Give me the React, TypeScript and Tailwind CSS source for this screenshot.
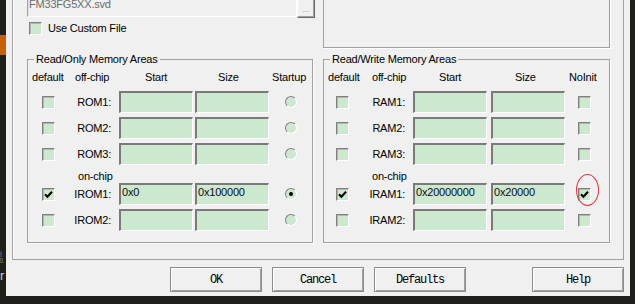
import React from 'react';

type Row = {
  label: string;
  start?: string;
  size?: string;
  checked?: boolean;
  last?: boolean;
  circled?: boolean;
};

const inputCls =
  'h-[22px] w-[74px] shrink-0 border-t-2 border-l-2 border-b border-r border-t-[#7a7a7a] border-l-[#7a7a7a] border-b-white border-r-white bg-[#cce8cf] pl-[1px] pt-[1px] leading-[13px] text-[#0a0a20] whitespace-nowrap overflow-hidden';

const Check = () => (
  <svg width="9" height="9" viewBox="0 0 9 9">
    <path d="M1 4.2 L3.4 6.8 L8 1.8" stroke="#000" strokeWidth="2" fill="none" />
  </svg>
);

const CheckBox = ({ checked, circled }: { checked?: boolean; circled?: boolean }) => (
  <span className="relative flex h-[13px] w-[13px] shrink-0 items-center justify-center border border-t-[#808080] border-l-[#808080] border-b-white border-r-white bg-[#cce8cf] shadow-[inset_1px_1px_0_#b4b4b4]">
    {checked && <Check />}
    {circled && (
      <span className="absolute left-[-3px] top-[-15px] h-[32px] w-[23px] rounded-[50%] border border-[#e5303f]" />
    )}
  </span>
);

const Radio = ({ on }: { on?: boolean }) => (
  <span className="flex h-[12px] w-[12px] shrink-0 items-center justify-center rounded-full border border-t-[#808080] border-l-[#808080] border-b-white border-r-white bg-[#cce8cf]">
    {on && <span className="h-[4px] w-[4px] rounded-full bg-black" />}
  </span>
);

const romOff: Row[] = [{ label: 'ROM1:' }, { label: 'ROM2:' }, { label: 'ROM3:' }];
const romOn: Row[] = [
  { label: 'IROM1:', start: '0x0', size: '0x100000', checked: true },
  { label: 'IROM2:' },
];
const ramOff: Row[] = [{ label: 'RAM1:' }, { label: 'RAM2:' }, { label: 'RAM3:' }];
const ramOn: Row[] = [
  { label: 'IRAM1:', start: '0x20000000', size: '0x20000', checked: true, circled: true },
  { label: 'IRAM2:' },
];

const RomRow = ({ r }: { r: Row }) => (
  <div className="flex h-[22px] items-center">
    <div className="w-[46px] shrink-0 pl-[14px]">
      <CheckBox checked={r.checked} />
    </div>
    <span className="w-[37px] shrink-0 text-right">{r.label}</span>
    <div className={`ml-[8px] ${inputCls}`}>{r.start}</div>
    <div className={`ml-[2px] ${inputCls}`}>{r.size}</div>
    <div className="ml-[16px]">
      <Radio on={r.checked} />
    </div>
  </div>
);

const RamRow = ({ r }: { r: Row }) => (
  <div className="flex h-[22px] items-center">
    <div className="w-[44px] shrink-0 pl-[12px]">
      <CheckBox checked={r.checked} />
    </div>
    <span className="w-[37px] shrink-0 text-right">{r.label}</span>
    <div className={`ml-[8px] ${inputCls}`}>{r.start}</div>
    <div className={`ml-[4px] ${inputCls}`}>{r.size}</div>
    <div className="ml-[13px]">
      <CheckBox checked={r.checked} circled={r.circled} />
    </div>
  </div>
);

const Button = ({ children, className = '' }: { children: React.ReactNode; className?: string }) => (
  <button
    className={`flex h-[25px] w-[92px] shrink-0 items-center justify-center border border-[#8c8c8c] bg-[#f0f0f0] font-['Liberation_Mono',monospace] text-[12px] tracking-[-1.2px] text-black shadow-[inset_1px_1px_0_#fff,inset_-1px_-1px_0_#a0a0a0] ${className}`}
  >
    {children}
  </button>
);

export default function App() {
  return (
    <div className="flex h-[304px] w-[635px] overflow-hidden bg-[#1e1e1b] font-['Liberation_Sans',Arial,sans-serif] text-[11px] tracking-[-0.2px] text-black">
      {/* background editor strip */}
      <div className="flex w-[6px] shrink-0 flex-col overflow-hidden">
        <div className="mt-[35px] h-[20px] bg-[#c4600c]" />
        <span className="mt-[42px] -ml-[8px] text-[14px] leading-[14px] text-[#6d7d8d]">衤</span>
        <span className="mt-[140px] -ml-[9px] text-[13px] leading-[14px] text-[#5d6a76]">温</span>
        <span className="mt-[4px] text-[13px] leading-[14px] text-[#c8c8c8]">r</span>
      </div>

      {/* dialog */}
      <div className="flex h-[296px] w-[624px] shrink-0 flex-col bg-[#f0f0f0]">
        <div className="ml-[6px] flex h-[260px] w-[612px] shrink-0 flex-col border-x border-b border-[#a0a0a0] pl-[14px] shadow-[inset_1px_0_0_#fff]">
          {/* top row */}
          <div className="flex h-[48px] shrink-0">
            <div className="flex w-[288px] shrink-0 flex-col">
              <div className="-mt-[5px] flex">
                <div className="h-[22px] w-[270px] border border-t-[#a0a0a0] border-l-[#a0a0a0] border-b-white border-r-white bg-[#f0f0f0] pl-[1px] pt-[2px] leading-[13px] text-[#6d6d6d] shadow-[inset_1px_1px_0_#e3e3e3]">
                  FM33FG5XX.svd
                </div>
                <div className="flex h-[23px] w-[18px] items-end justify-center border border-t-white border-l-white border-b-[#696969] border-r-[#696969] pb-[3px] text-[9px] leading-[9px] text-[#a0a0a0] shadow-[inset_-1px_-1px_0_#a0a0a0]">
                  ...
                </div>
              </div>
              <label className="mt-[4px] ml-[2px] flex items-center gap-[6px] leading-[13px]">
                <CheckBox />
                <span>Use Custom File</span>
              </label>
            </div>
            <div className="-mt-[4px] ml-[8px] h-[52px] w-[287px] shrink-0 border border-[#a0a0a0] shadow-[1px_1px_0_#fff]" />
          </div>

          {/* memory areas */}
          <div className="mt-[4px] flex">
            <fieldset className="h-[191px] w-[286px] shrink-0 border border-[#a0a0a0] shadow-[1px_1px_0_#fff]">
              <legend className="ml-[6px] px-[2px] leading-[14px]">Read/Only Memory Areas</legend>
              <div className="mt-[4px] flex pl-[4px] leading-[14px] whitespace-nowrap">
                <span className="w-[43px] shrink-0">default</span>
                <span className="w-[70px] shrink-0">off-chip</span>
                <span className="w-[73px] shrink-0">Start</span>
                <span className="w-[54px] shrink-0">Size</span>
                <span>Startup</span>
              </div>
              <div className="mt-[7px] flex flex-col gap-[4px]">
                {romOff.map((r) => (
                  <RomRow key={r.label} r={r} />
                ))}
              </div>
              <div className="mt-[4px] pl-[50px] leading-[14px]">on-chip</div>
              <div className="flex flex-col gap-[4px]">
                {romOn.map((r) => (
                  <RomRow key={r.label} r={r} />
                ))}
              </div>
            </fieldset>

            <fieldset className="ml-[10px] h-[191px] w-[287px] shrink-0 border border-[#a0a0a0] shadow-[1px_1px_0_#fff]">
              <legend className="ml-[6px] px-[2px] leading-[14px]">Read/Write Memory Areas</legend>
              <div className="mt-[4px] flex pl-[4px] leading-[14px] whitespace-nowrap">
                <span className="w-[44px] shrink-0">default</span>
                <span className="w-[67px] shrink-0">off-chip</span>
                <span className="w-[76px] shrink-0">Start</span>
                <span className="w-[54px] shrink-0">Size</span>
                <span>NoInit</span>
              </div>
              <div className="mt-[7px] flex flex-col gap-[4px]">
                {ramOff.map((r) => (
                  <RamRow key={r.label} r={r} />
                ))}
              </div>
              <div className="mt-[4px] pl-[48px] leading-[14px]">on-chip</div>
              <div className="flex flex-col gap-[4px]">
                {ramOn.map((r) => (
                  <RamRow key={r.label} r={r} />
                ))}
              </div>
            </fieldset>
          </div>
        </div>

        {/* buttons */}
        <div className="mt-[7px] flex pl-[164px]">
          <Button>OK</Button>
          <Button className="ml-[10px]">Cancel</Button>
          <Button className="ml-[10px]">Defaults</Button>
          <Button className="ml-[66px]">Help</Button>
        </div>
      </div>
    </div>
  );
}
